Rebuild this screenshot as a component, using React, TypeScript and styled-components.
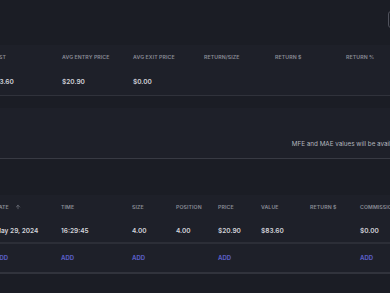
import styled, { createGlobalStyle } from "styled-components";
import { ArrowUp } from "lucide-react";

const GlobalStyle = createGlobalStyle`
  html, body {
    margin: 0;
    padding: 0;
    background: #1b1d25;
    overflow: hidden;
  }
  body {
    font-family: Inter, "Noto Sans", sans-serif;
  }
`;

const summaryCols = "71px repeat(7, 71px) 1fr";
const execCols = "75px 66px 71px 44px 42px 43px 49px 50px 80px 1fr";

const summaryHead = [
  "Size",
  "Cost",
  "Avg entry price",
  "Avg exit price",
  "Return/size",
  "Return $",
  "Return %",
  "Duration",
];
const summaryRow = ["4.00", "$83.60", "$20.90", "$0.00", "", "", "", ""];

const execHead = [
  "Side",
  "Date",
  "Time",
  "Size",
  "Position",
  "Price",
  "Value",
  "Return $",
  "Commission",
];
const execRow = [
  "Buy",
  "May 29, 2024",
  "16:29:45",
  "4.00",
  "4.00",
  "$20.90",
  "$83.60",
  "",
  "$0.00",
];
const addRow = [false, true, true, true, false, true, false, false, true];

export default function App() {
  return (
    <Viewport>
      <GlobalStyle />
      <Canvas>
        <TopBar>
          <Title>Stats</Title>
          <Controls>
            <GhostButton>Edit</GhostButton>
          </Controls>
        </TopBar>

        <Panel>
          <Row $cols={summaryCols} $height={24}>
            {summaryHead.map((h) => (
              <HeadCell key={h}>{h}</HeadCell>
            ))}
          </Row>
          <Row $cols={summaryCols} $height={26} $border="1px solid #30323b">
            {summaryRow.map((v, i) => (
              <Cell key={i}>{v}</Cell>
            ))}
          </Row>
        </Panel>

        <MessageCard>
          <Message>
            MFE and MAE values will be available once the trade is closed.
          </Message>
        </MessageCard>

        <SectionHeader>
          <Title>Executions</Title>
        </SectionHeader>

        <Panel>
          <Row $cols={execCols} $height={24}>
            {execHead.map((h) => (
              <HeadCell key={h}>
                {h}
                {h === "Date" && <ArrowUp size={6} strokeWidth={2.2} />}
              </HeadCell>
            ))}
          </Row>
          <Row $cols={execCols} $height={23} $border="2px solid #2c2e37">
            {execRow.map((v, i) => (
              <Cell key={i}>{v}</Cell>
            ))}
          </Row>
          <Row $cols={execCols} $height={28} $border="2px solid #31333c">
            {addRow.map((a, i) => (
              <Cell key={i}>{a && <AddLink>Add</AddLink>}</Cell>
            ))}
          </Row>
        </Panel>
      </Canvas>
    </Viewport>
  );
}

const Viewport = styled.div`
  width: 390px;
  height: 293px;
  overflow: hidden;
  background: #1b1d25;
`;

// the screenshot is a crop of a wider page, so the canvas starts off-screen
const Canvas = styled.div`
  width: 930px;
  margin-left: -80px;
  display: flex;
  flex-direction: column;
`;

const TopBar = styled.div`
  height: 45px;
  display: grid;
  grid-template-columns: 1fr 1fr;
  align-items: start;
`;

const Title = styled.h2`
  margin: 0;
  padding: 14px 0 0 8px;
  font-size: 6px;
  font-weight: 600;
  color: #e0e1e6;
`;

const Controls = styled.div`
  display: flex;
  gap: 6px;
  padding: 11px 0 0 3px;
`;

const GhostButton = styled.button`
  height: 17px;
  padding: 0 10px;
  border: 1px solid #50525c;
  border-radius: 3px;
  background: transparent;
  color: #c9cad0;
  font: 600 6px Inter, sans-serif;
`;

const Panel = styled.div`
  background: #1e2029;
`;

const Row = styled.div<{ $cols: string; $height: number; $border?: string }>`
  display: grid;
  grid-template-columns: ${(p) => p.$cols};
  height: ${(p) => p.$height}px;
  align-items: center;
  border-bottom: ${(p) => p.$border || "none"};
`;

const HeadCell = styled.div`
  display: flex;
  align-items: center;
  gap: 6px;
  font-size: 5.2px;
  font-weight: 600;
  letter-spacing: 0.1px;
  text-transform: uppercase;
  color: #8a8c96;
  white-space: nowrap;
`;

const Cell = styled.div`
  font-size: 6.5px;
  font-weight: 600;
  color: #d3d4da;
  white-space: nowrap;
`;

const AddLink = styled.span`
  font-size: 6px;
  font-weight: 700;
  text-transform: uppercase;
  color: #5a5ec4;
  cursor: pointer;
`;

const MessageCard = styled.div`
  margin-top: 12px;
  padding: 32px 0 9px;
  background: #1e2029;
  border-bottom: 1px solid #383a43;
`;

const Message = styled.p`
  margin: 0;
  line-height: 9px;
  font-size: 6.3px;
  color: #b3b5bd;
  text-align: center;
  white-space: nowrap;
`;

const SectionHeader = styled.div`
  height: 36px;
`;
